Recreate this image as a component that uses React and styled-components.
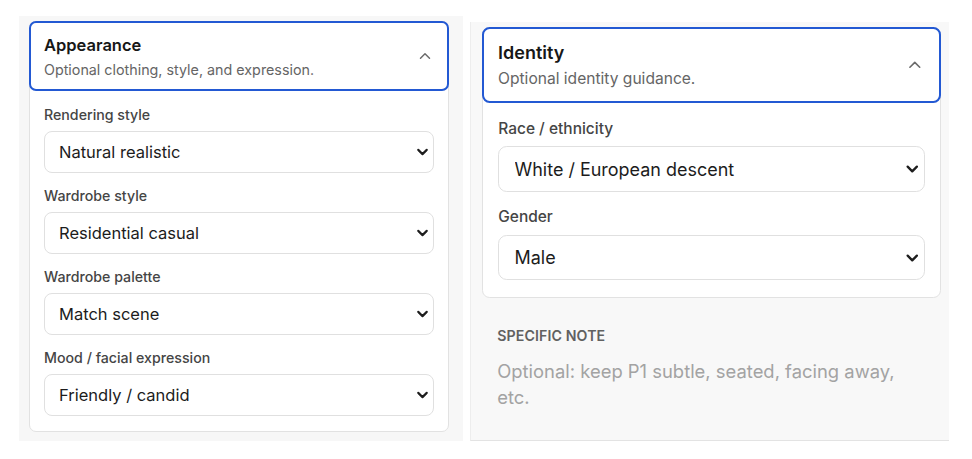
import React from "react";
import styled, { createGlobalStyle } from "styled-components";
import { ChevronDown, ChevronUp } from "lucide-react";

const GlobalStyle = createGlobalStyle`
  html, body {
    margin: 0;
    background: #ffffff;
  }
  body {
    font-family: Inter, "Noto Sans", sans-serif;
    color: #1b1b1b;
    -webkit-font-smoothing: antialiased;
  }
  * {
    box-sizing: border-box;
  }
`;

const appearanceFields = [
  { label: "Rendering style", value: "Natural realistic" },
  { label: "Wardrobe style", value: "Residential casual" },
  { label: "Wardrobe palette", value: "Match scene" },
  { label: "Mood / facial expression", value: "Friendly / candid" },
];

const identityFields = [
  { label: "Race / ethnicity", value: "White / European descent" },
  { label: "Gender", value: "Male" },
];

function Field({ label, value }) {
  return (
    <FieldWrap>
      <Label>{label}</Label>
      <SelectBox>
        <Select defaultValue={value}>
          <option>{value}</option>
        </Select>
        <SelectArrow>
          <ChevronDown size={17} strokeWidth={3} />
        </SelectArrow>
      </SelectBox>
    </FieldWrap>
  );
}

function Section({ title, subtitle, fields }) {
  return (
    <Card>
      <Header type="button">
        <HeaderText>
          <Title>{title}</Title>
          <Subtitle>{subtitle}</Subtitle>
        </HeaderText>
        <ChevronUp size={18} strokeWidth={2} color="#6b6b6b" />
      </Header>
      <Body>
        {fields.map((f) => (
          <Field key={f.label} {...f} />
        ))}
      </Body>
    </Card>
  );
}

export default function App() {
  return (
    <>
      <GlobalStyle />
      <Page>
        <LeftPane>
          <Section
            title="Appearance"
            subtitle="Optional clothing, style, and expression."
            fields={appearanceFields}
          />
        </LeftPane>
        <RightPane>
          <Zoomed>
            <Section
              title="Identity"
              subtitle="Optional identity guidance."
              fields={identityFields}
            />
            <Note>
              <NoteLabel>Specific note</NoteLabel>
              <NoteInput
                rows={2}
                placeholder="Optional: keep P1 subtle, seated, facing away, etc."
              />
            </Note>
          </Zoomed>
        </RightPane>
      </Page>
    </>
  );
}

const Page = styled.div`
  display: flex;
  align-items: flex-start;
  gap: 7px;
  padding: 16px 0 0 19px;
`;

const LeftPane = styled.div`
  width: 444px;
  height: 425px;
  padding: 5px 14px 0 10px;
  background: #f7f7f7;
`;

const RightPane = styled.div`
  width: 479px;
  height: 419px;
  margin-top: 6px;
  padding: 5px 8px 0 11px;
  background: #f8f8f8;
  border-left: 1px solid #ededed;
  border-bottom: 1px solid #e3e3e3;
`;

const Zoomed = styled.div`
  zoom: 1.09;
`;

const Card = styled.section`
  background: #ffffff;
  border: 1px solid #e2e2e2;
  border-radius: 7px;
`;

const Header = styled.button`
  display: flex;
  align-items: center;
  justify-content: space-between;
  width: calc(100% + 2px);
  margin: -1px -1px 0;
  padding: 11px 13px 10.5px 13px;
  background: #ffffff;
  border: 2px solid #2359d3;
  border-radius: 7px;
  font: inherit;
  text-align: left;
  cursor: pointer;
`;

const HeaderText = styled.div`
  display: flex;
  flex-direction: column;
  gap: 3.5px;
`;

const Title = styled.span`
  font-size: 16.5px;
  line-height: 22px;
  font-weight: 600;
  color: #171717;
`;

const Subtitle = styled.span`
  font-size: 14.3px;
  line-height: 19px;
  color: #656565;
`;

const Body = styled.div`
  display: flex;
  flex-direction: column;
  gap: 14px;
  padding: 15px 14px 15px;
`;

const FieldWrap = styled.div`
  display: flex;
  flex-direction: column;
  gap: 7px;
`;

const Label = styled.label`
  font-size: 14.2px;
  line-height: 18px;
  font-weight: 500;
  color: #454545;
`;

const SelectBox = styled.div`
  position: relative;
`;

const Select = styled.select`
  appearance: none;
  width: 100%;
  height: 42px;
  padding: 0 36px 0 14px;
  background: #ffffff;
  border: 1px solid #e0e0e0;
  border-radius: 8px;
  font-family: inherit;
  font-size: 16.5px;
  color: #1c1c1c;
  outline: none;
`;

const SelectArrow = styled.span`
  position: absolute;
  top: 50%;
  right: 3px;
  display: flex;
  transform: translateY(-50%);
  color: #1e1e1e;
  pointer-events: none;
`;

const Note = styled.div`
  display: flex;
  flex-direction: column;
  gap: 12px;
  padding: 27px 14px 0;
`;

const NoteLabel = styled.div`
  font-size: 13px;
  line-height: 16px;
  font-weight: 600;
  letter-spacing: 0.1px;
  text-transform: uppercase;
  color: #616161;
`;

const NoteInput = styled.textarea`
  width: calc(100% - 10px);
  padding: 0;
  background: transparent;
  border: none;
  resize: none;
  overflow: hidden;
  outline: none;
  font-family: inherit;
  font-size: 16.9px;
  line-height: 24px;
  color: #1c1c1c;

  &::placeholder {
    color: #a3a3a3;
  }
`;
